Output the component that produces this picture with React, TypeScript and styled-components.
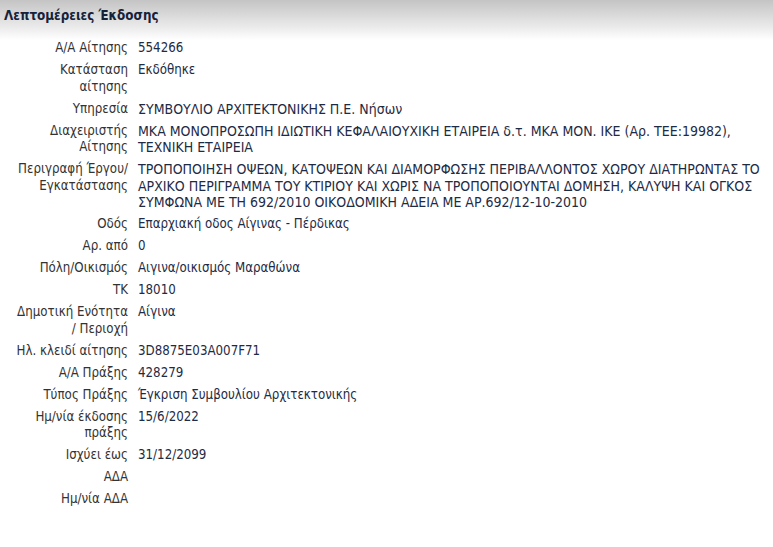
import * as React from 'react';
import styled, { createGlobalStyle } from 'styled-components';

const GlobalStyle = createGlobalStyle`
  html, body {
    margin: 0;
    padding: 0;
    background: #ffffff;
  }
`;

type Row = { label: string; value: string; caps?: boolean };

const rows: Row[] = [
  { label: 'Α/Α Αίτησης', value: '554266' },
  { label: 'Κατάσταση αίτησης', value: 'Εκδόθηκε' },
  { label: 'Υπηρεσία', value: 'ΣΥΜΒΟΥΛΙΟ ΑΡΧΙΤΕΚΤΟΝΙΚΗΣ Π.Ε. Νήσων', caps: true },
  {
    label: 'Διαχειριστής Αίτησης',
    value:
      'ΜΚΑ ΜΟΝΟΠΡΟΣΩΠΗ ΙΔΙΩΤΙΚΗ ΚΕΦΑΛΑΙΟΥΧΙΚΗ ΕΤΑΙΡΕΙΑ δ.τ. ΜΚΑ ΜΟΝ. ΙΚΕ (Αρ. ΤΕΕ:19982), ΤΕΧΝΙΚΗ ΕΤΑΙΡΕΙΑ',
    caps: true,
  },
  {
    label: 'Περιγραφή Έργου/ Εγκατάστασης',
    value:
      'ΤΡΟΠΟΠΟΙΗΣΗ ΟΨΕΩΝ, ΚΑΤΟΨΕΩΝ ΚΑΙ ΔΙΑΜΟΡΦΩΣΗΣ ΠΕΡΙΒΑΛΛΟΝΤΟΣ ΧΩΡΟΥ ΔΙΑΤΗΡΩΝΤΑΣ ΤΟ ΑΡΧΙΚΟ ΠΕΡΙΓΡΑΜΜΑ ΤΟΥ ΚΤΙΡΙΟΥ ΚΑΙ ΧΩΡΙΣ ΝΑ ΤΡΟΠΟΠΟΙΟΥΝΤΑΙ ΔΟΜΗΣΗ, ΚΑΛΥΨΗ ΚΑΙ ΟΓΚΟΣ ΣΥΜΦΩΝΑ ΜΕ ΤΗ 692/2010 ΟΙΚΟΔΟΜΙΚΗ ΑΔΕΙΑ ΜΕ ΑΡ.692/12-10-2010',
    caps: true,
  },
  { label: 'Οδός', value: 'Επαρχιακή οδος Αίγινας - Πέρδικας' },
  { label: 'Αρ. από', value: '0' },
  { label: 'Πόλη/Οικισμός', value: 'Αιγινα/οικισμός Μαραθώνα' },
  { label: 'ΤΚ', value: '18010' },
  { label: 'Δημοτική Ενότητα / Περιοχή', value: 'Αίγινα' },
  { label: 'Ηλ. κλειδί αίτησης', value: '3D8875E03A007F71' },
  { label: 'Α/Α Πράξης', value: '428279' },
  { label: 'Τύπος Πράξης', value: 'Έγκριση Συμβουλίου Αρχιτεκτονικής' },
  { label: 'Ημ/νία έκδοσης πράξης', value: '15/6/2022' },
  { label: 'Ισχύει έως', value: '31/12/2099' },
  { label: 'ΑΔΑ', value: '' },
  { label: 'Ημ/νία ΑΔΑ', value: '' },
];

const App = () => (
  <Page>
    <GlobalStyle />
    <Header>
      <Title>Λεπτομέρειες Έκδοσης</Title>
    </Header>
    <Details>
      {rows.map(row => (
        <React.Fragment key={row.label}>
          <Label>{row.label}</Label>
          <Value $caps={row.caps}>{row.value}</Value>
        </React.Fragment>
      ))}
    </Details>
  </Page>
);

const Page = styled.div`
  width: 773px;
  min-height: 547px;
  font-family: 'DejaVu Sans Condensed', 'DejaVu Sans', sans-serif;
  font-size: 13.2px;
  color: #2b2b2b;
`;

const Header = styled.div`
  height: 40px;
  padding: 8px 4px 0;
  box-sizing: border-box;
  background: linear-gradient(to bottom, #c4c4c4 0%, #ececec 70%, #ffffff 100%);
`;

const Title = styled.h2`
  margin: 0;
  font-size: 13.3px;
  font-weight: bold;
  color: #15223a;
`;

const Details = styled.div`
  display: grid;
  grid-template-columns: 118px 1fr;
  column-gap: 10px;
  row-gap: 5.5px;
  padding: 0 4px 0 10px;
  line-height: 16.5px;
`;

const Label = styled.div`
  text-align: right;
  color: #333333;
`;

/* upper-case Greek runs wider in the original face than in DejaVu */
const Value = styled.div<{ $caps?: boolean }>`
  color: #1e2b45;
  min-height: 16.5px;
  font-size: ${p => (p.$caps ? '14px' : 'inherit')};
`;

export default App;
